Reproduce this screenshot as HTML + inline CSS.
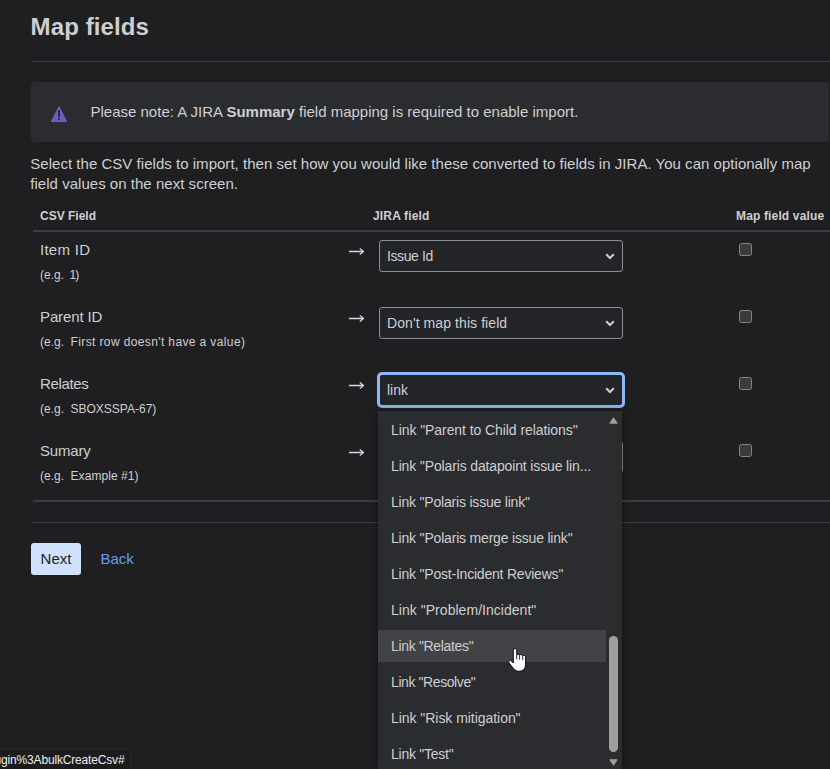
<!DOCTYPE html>
<html lang="en">
<head>
<meta charset="utf-8">
<title>Map fields</title>
<style>
*{box-sizing:border-box;margin:0;padding:0}
html,body{width:830px;height:769px;overflow:hidden;background:#1f1f21}
body{position:relative;font-family:"Liberation Sans",Arial,sans-serif;color:#cecfd2;font-size:14px}
.abs{position:absolute;white-space:nowrap}
h1{position:absolute;left:30.6px;letter-spacing:.1px;top:12px;font-size:24px;line-height:30px;font-weight:bold;color:#cecfd2;white-space:nowrap}
.hr{position:absolute;height:1px;background:#3b3c40}
.note{position:absolute;left:31px;top:82px;width:798px;height:60px;background:#2b2c2f;border-radius:3px}
.note p{position:absolute;left:59.5px;top:20px;line-height:20px;font-size:15px;white-space:nowrap}
.para{position:absolute;left:30.3px;top:154px;line-height:20px;font-size:15px;white-space:nowrap}
.th{position:absolute;top:208px;font-size:12px;line-height:16px;font-weight:bold;white-space:nowrap}
.name{position:absolute;left:40px;font-size:15px;line-height:20px;white-space:nowrap}
.eg{position:absolute;left:40px;font-size:12px;line-height:16px;white-space:nowrap}
.arrow{position:absolute;left:348px;width:16px;height:10px}
.sel{position:absolute;left:379px;width:244px;height:32px;border:1px solid #8c8f97;border-radius:3px;background:#242528;font-size:14px;line-height:30px;padding-left:7px;color:#cecfd2;white-space:nowrap}
.sel svg{position:absolute;right:7px;top:12px}
.sel.focus{left:377px;width:248px;height:36px;border:3px solid #8fb8f6;border-radius:5px;background:#242528;line-height:30px;padding-left:7px}
.sel.focus svg{right:7px;top:12px}
.cb{position:absolute;left:739px;width:13px;height:13px;border:1px solid #858585;border-radius:2.5px;background:#3b3b3b}
.dd{position:absolute;left:378px;top:411px;width:244px;height:358px;background:#2b2c2f;box-shadow:0 0 8px rgba(0,0,0,.45)}
.dd .it{position:absolute;left:0;width:228px;height:32px;line-height:32px;padding-left:13px;font-size:14px;color:#cecfd2;white-space:nowrap}
.dd .it.hov{background:#424347}
.sb{position:absolute;left:228px;top:0;width:16px;height:358px;background:#2c2c2c}
.thumb{position:absolute;left:3px;top:225px;width:9px;height:116px;border-radius:4.5px;background:#9f9f9f}
.btn{position:absolute;left:31px;top:543px;width:50px;height:32px;border-radius:3px;background:#cfe1fd;color:#1f1f21;font-size:15px;line-height:32px;text-align:center}
.back{position:absolute;left:100.5px;top:549px;font-size:15px;line-height:20px;color:#669df1}
.status{position:absolute;left:0;top:749px;width:131px;height:20px;background:#1c1c1c;border-top:1px solid #262626;border-right:1px solid #262626;border-top-right-radius:4px;color:#ececec;font-size:12px;line-height:20px;white-space:nowrap;overflow:hidden}
</style>
</head>
<body>
<h1>Map fields</h1>
<div class="hr" style="left:31px;top:61px;width:799px"></div>

<div class="note">
<svg style="position:absolute;left:19px;top:23px" width="18" height="18" viewBox="0 0 18 18"><path d="M9 1.6 L16.7 16.5 L1.3 16.5 Z" fill="#6e5dc6" stroke="#6e5dc6" stroke-width="1" stroke-linejoin="round"/><rect x="8" y="5" width="2" height="7.4" fill="#2b2c2f"/><rect x="8" y="13.4" width="2" height="1.8" fill="#2b2c2f"/></svg>
<p>Please note: A JIRA <b>Summary</b> field mapping is required to enable import.</p>
</div>

<div class="para" style="letter-spacing:0.028px">Select the CSV fields to import, then set how you would like these converted to fields in JIRA. You can optionally map<br>field values on the next screen.</div>

<div class="th" style="left:40px">CSV Field</div>
<div class="th" style="left:373px;letter-spacing:.17px">JIRA field</div>
<div class="th" style="left:736px;letter-spacing:.15px">Map field value</div>
<div class="hr" style="left:33px;top:230px;width:797px;height:2px"></div>

<!-- row 1 -->
<div class="name" style="top:240px;letter-spacing:.27px">Item ID</div>
<div class="eg" style="top:267px">(e.g.<span style="margin-left:5.5px;letter-spacing:-1px">1)</span></div>
<svg class="arrow" style="top:247px" viewBox="0 0 16 10"><path d="M1 4.5H15.4M11.8 1.6L15.6 4.5L11.8 7.4" fill="none" stroke="#d6d7da" stroke-width="1.3"/></svg>
<div class="sel" style="top:240px;letter-spacing:-.4px">Issue Id<svg width="10" height="7" viewBox="0 0 10 7"><path d="M1.2 1.2L5 5L8.8 1.2" fill="none" stroke="#cfcfcf" stroke-width="2"/></svg></div>
<div class="cb" style="top:243px"></div>

<!-- row 2 -->
<div class="name" style="top:307px;letter-spacing:-.12px">Parent ID</div>
<div class="eg" style="top:334px">(e.g.<span style="margin-left:6.5px;letter-spacing:.38px">First row doesn't have a value)</span></div>
<svg class="arrow" style="top:314px" viewBox="0 0 16 10"><path d="M1 4.5H15.4M11.8 1.6L15.6 4.5L11.8 7.4" fill="none" stroke="#d6d7da" stroke-width="1.3"/></svg>
<div class="sel" style="top:307px;letter-spacing:.08px">Don't map this field<svg width="10" height="7" viewBox="0 0 10 7"><path d="M1.2 1.2L5 5L8.8 1.2" fill="none" stroke="#cfcfcf" stroke-width="2"/></svg></div>
<div class="cb" style="top:310px"></div>

<!-- row 3 -->
<div class="name" style="top:374px;letter-spacing:-.36px">Relates</div>
<div class="eg" style="top:401px">(e.g.<span style="margin-left:6.5px">SBOXSSPA-67)</span></div>
<svg class="arrow" style="top:381px" viewBox="0 0 16 10"><path d="M1 4.5H15.4M11.8 1.6L15.6 4.5L11.8 7.4" fill="none" stroke="#d6d7da" stroke-width="1.3"/></svg>
<div class="sel focus" style="top:372px">link<svg width="10" height="7" viewBox="0 0 10 7"><path d="M1.2 1.2L5 5L8.8 1.2" fill="none" stroke="#cfcfcf" stroke-width="2"/></svg></div>
<div class="cb" style="top:377px"></div>

<!-- row 4 -->
<div class="name" style="top:441px;letter-spacing:-.17px">Sumary</div>
<div class="eg" style="top:468px">(e.g.<span style="margin-left:6.5px;letter-spacing:.07px">Example #1)</span></div>
<svg class="arrow" style="top:448px" viewBox="0 0 16 10"><path d="M1 4.5H15.4M11.8 1.6L15.6 4.5L11.8 7.4" fill="none" stroke="#d6d7da" stroke-width="1.3"/></svg>
<div class="sel" style="top:441px">&nbsp;</div>
<div class="cb" style="top:444px"></div>

<div class="hr" style="left:33px;top:500px;width:797px;height:2px"></div>
<div class="hr" style="left:31px;top:522px;width:799px"></div>

<div class="btn">Next</div>
<div class="back">Back</div>

<!-- dropdown -->
<div class="dd">
<div class="it" style="top:3px;letter-spacing:-.075px">Link "Parent to Child relations"</div>
<div class="it" style="top:39px;letter-spacing:-.14px">Link "Polaris datapoint issue lin...</div>
<div class="it" style="top:75px;letter-spacing:-.2px">Link "Polaris issue link"</div>
<div class="it" style="top:111px;letter-spacing:-.19px">Link "Polaris merge issue link"</div>
<div class="it" style="top:147px;letter-spacing:-.21px">Link "Post-Incident Reviews"</div>
<div class="it" style="top:183px;letter-spacing:.035px">Link "Problem/Incident"</div>
<div class="it hov" style="top:219px;letter-spacing:-.33px">Link "Relates"</div>
<div class="it" style="top:255px;letter-spacing:-.41px">Link "Resolve"</div>
<div class="it" style="top:291px;letter-spacing:-.045px">Link "Risk mitigation"</div>
<div class="it" style="top:327px;letter-spacing:-.25px">Link "Test"</div>
<div class="sb">
<svg style="position:absolute;left:3px;top:6px" width="9" height="7" viewBox="0 0 9 7"><path d="M4.5 0.8L8.2 6.2H0.8Z" fill="#9f9f9f" stroke="#9f9f9f" stroke-width="1" stroke-linejoin="round"/></svg>
<div class="thumb"></div>
<svg style="position:absolute;left:3px;top:348px" width="9" height="7" viewBox="0 0 9 7"><path d="M4.5 6.2L8.2 0.8H0.8Z" fill="#9f9f9f" stroke="#9f9f9f" stroke-width="1" stroke-linejoin="round"/></svg>
</div>
</div>

<!-- cursor -->
<svg style="position:absolute;left:506px;top:646px" width="22" height="28" viewBox="506 646 22 28"><path d="M513.3 650.2Q513.3 648.5 515 648.5Q516.7 648.5 516.7 650.2L516.7 654.5Q518.2 653.8 519.6 654.7Q521.2 654.2 522.7 655.3Q524.4 654.9 525.6 656.4L525.6 664Q525.6 671.3 518.8 671.3Q515.5 671.3 513.5 668.5L509 662.9Q508.3 661.6 509.4 660.7Q510.5 660.1 511.6 661.2L513.3 663Z" fill="#fff" stroke="#0b0b1f" stroke-width="1" stroke-linejoin="round"/><path d="M516.7 654.5V659.3M519.6 654.9V659.5M522.7 655.6V660" fill="none" stroke="#0b0b1f" stroke-width="0.9"/></svg>

<div class="status"><span style="margin-left:-5.4px;letter-spacing:-.17px">ugin%3AbulkCreateCsv#</span></div>
</body>
</html>
